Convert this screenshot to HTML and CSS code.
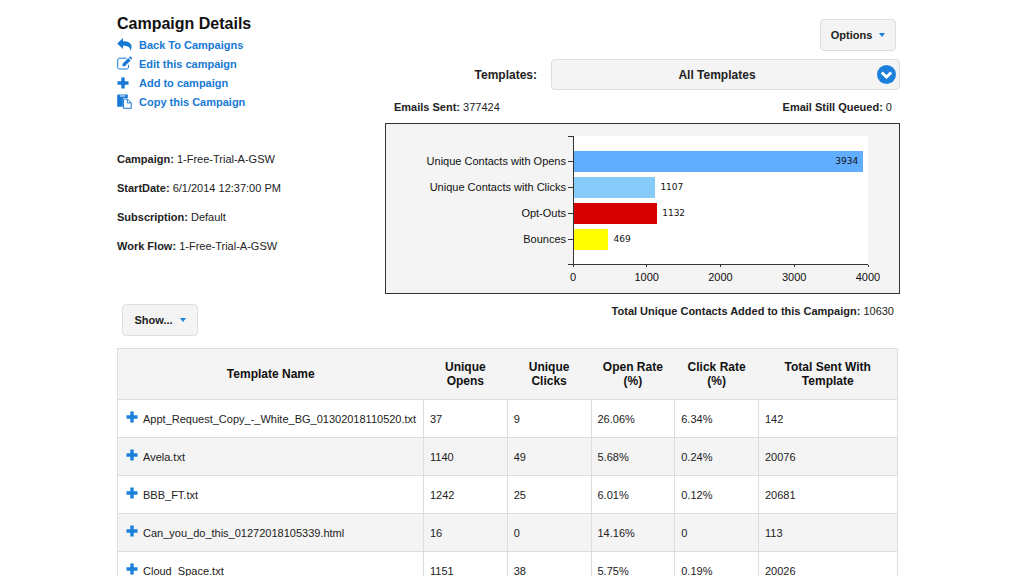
FILE: index.html
```
<!DOCTYPE html>
<html lang="en">
<head>
    <meta charset="UTF-8">
    <meta name="viewport" content="width=device-width, initial-scale=1.0">
    <title>Campaign Details</title>
    <link rel="stylesheet" href="styles.css">
</head>
<body>
    <svg class="sprite" aria-hidden="true">
        <symbol id="plus" viewBox="0 0 12 12">
            <path d="M4.3 0.5h3.4v3.8h3.8v3.4H7.7v3.8H4.3V7.7H0.5V4.3h3.8z"/>
        </symbol>
    </svg>

    <div class="container">
        <div class="top">
            <div class="details">
                <h1>Campaign Details</h1>
                <ul class="actions">
                    <li>
                        <a href="#">
                            <svg class="icon" viewBox="0 0 15 14"><path d="M6 0.5v3.2c5.4 0 8.6 1.9 8.6 5.6 0 1.5-.5 2.9-1.2 4.2.2-3.7-2.3-5.3-7.4-5.3v3.3L0.2 6z"/></svg>
                            Back To Campaigns
                        </a>
                    </li>
                    <li>
                        <a href="#">
                            <svg class="icon" viewBox="0 0 15 14">
                                <path class="line" d="M9.5 1.7H2.5a1.8 1.8 0 0 0-1.8 1.8v7.2a1.8 1.8 0 0 0 1.8 1.8h7.2a1.8 1.8 0 0 0 1.8-1.8V8.5"/>
                                <path d="M5.500 7.3L11.3 1.6l2.3 2.3L7.8 9.7H5.5zM12 0.9l.6-.6a.9.9 0 0 1 1.2 0l1 1a.9.9 0 0 1 0 1.2l-.6.6z"/>
                            </svg>
                            Edit this campaign
                        </a>
                    </li>
                    <li>
                        <a href="#">
                            <svg class="icon icon-plus"><use href="#plus"/></svg>
                            Add to campaign
                        </a>
                    </li>
                    <li>
                        <a href="#">
                            <svg class="icon" viewBox="0 0 15 15">
                                <path d="M0.8 0.5h9.4q.6 0 .6.6V4H7a1.2 1.2 0 0 0-1.2 1.2v7.6H0.8q-.6 0-.6-.6V1.1q0-.6.6-.6z"/>
                                <path class="gap" d="M2.8 1.5h5.4v1H2.8z"/>
                                <path class="line" d="M6.5 5.1h4l3.7 3.6v5.6H6.5zM10.3 5.2v3.7h3.8"/>
                            </svg>
                            Copy this Campaign
                        </a>
                    </li>
                </ul>
                <dl class="meta">
                    <div><dt>Campaign:</dt> <dd>1-Free-Trial-A-GSW</dd></div>
                    <div><dt>StartDate:</dt> <dd>6/1/2014 12:37:00 PM</dd></div>
                    <div><dt>Subscription:</dt> <dd>Default</dd></div>
                    <div><dt>Work Flow:</dt> <dd>1-Free-Trial-A-GSW</dd></div>
                </dl>
            </div>

            <div class="stats">
                <div class="options">
                    <button type="button" class="btn">Options <span class="caret"></span></button>
                </div>
                <div class="templates">
                    <label for="templates">Templates:</label>
                    <div class="select">
                        <select id="templates">
                            <option>All Templates</option>
                        </select>
                        <svg class="select-arrow" viewBox="0 0 19 19">
                            <circle cx="9.5" cy="9.5" r="9.5"/>
                            <path d="M4.8 7.5l4.7 4.5 4.7-4.5"/>
                        </svg>
                    </div>
                </div>
                <div class="counts">
                    <span><b>Emails Sent:</b> 377424</span>
                    <span><b>Email Still Queued:</b> 0</span>
                </div>

                <div class="chart">
                    <ul class="chart-labels">
                        <li>Unique Contacts with Opens</li>
                        <li>Unique Contacts with Clicks</li>
                        <li>Opt-Outs</li>
                        <li>Bounces</li>
                    </ul>
                    <div class="plot">
                        <div class="row"><div class="bar opens" style="width: 98.35%">3934</div></div>
                        <div class="row"><div class="bar clicks" style="width: 27.68%"></div><span>1107</span></div>
                        <div class="row"><div class="bar optouts" style="width: 28.3%"></div><span>1132</span></div>
                        <div class="row"><div class="bar bounces" style="width: 11.73%"></div><span>469</span></div>
                    </div>
                    <div class="axis">
                        <ol>
                            <li>0</li>
                            <li>1000</li>
                            <li>2000</li>
                            <li>3000</li>
                            <li>4000</li>
                        </ol>
                    </div>
                </div>

                <p class="total"><b>Total Unique Contacts Added to this Campaign:</b> 10630</p>
            </div>
        </div>

        <button type="button" class="btn btn-show">Show... <span class="caret"></span></button>

        <table>
            <colgroup>
                <col class="col-name">
                <col span="4">
                <col class="col-total">
            </colgroup>
            <thead>
                <tr>
                    <th>Template Name</th>
                    <th>Unique<br>Opens</th>
                    <th>Unique<br>Clicks</th>
                    <th>Open Rate<br>(%)</th>
                    <th>Click Rate<br>(%)</th>
                    <th>Total Sent With<br>Template</th>
                </tr>
            </thead>
            <tbody>
                <tr>
                    <td><button type="button" class="expand" aria-label="Expand"><svg><use href="#plus"/></svg></button>Appt_Request_Copy_-_White_BG_01302018110520.txt</td>
                    <td>37</td><td>9</td><td>26.06%</td><td>6.34%</td><td>142</td>
                </tr>
                <tr>
                    <td><button type="button" class="expand" aria-label="Expand"><svg><use href="#plus"/></svg></button>Avela.txt</td>
                    <td>1140</td><td>49</td><td>5.68%</td><td>0.24%</td><td>20076</td>
                </tr>
                <tr>
                    <td><button type="button" class="expand" aria-label="Expand"><svg><use href="#plus"/></svg></button>BBB_FT.txt</td>
                    <td>1242</td><td>25</td><td>6.01%</td><td>0.12%</td><td>20681</td>
                </tr>
                <tr>
                    <td><button type="button" class="expand" aria-label="Expand"><svg><use href="#plus"/></svg></button>Can_you_do_this_01272018105339.html</td>
                    <td>16</td><td>0</td><td>14.16%</td><td>0</td><td>113</td>
                </tr>
                <tr>
                    <td><button type="button" class="expand" aria-label="Expand"><svg><use href="#plus"/></svg></button>Cloud_Space.txt</td>
                    <td>1151</td><td>38</td><td>5.75%</td><td>0.19%</td><td>20026</td>
                </tr>
            </tbody>
        </table>
    </div>
</body>
</html>
```

FILE: styles.css
```
* {
    box-sizing: border-box;
}

html {
    scrollbar-width: none;
}

body {
    margin: 0;
    background: #fff;
    color: #222;
    font: 11px/16px "Liberation Sans", Arial, sans-serif;
}

ul, ol, dl, dd, p {
    margin: 0;
    padding: 0;
    list-style: none;
}

.sprite {
    position: absolute;
    width: 0;
    height: 0;
}

.container {
    padding: 0 124px 0 117px;
}

.top {
    display: grid;
    grid-template-columns: 268px 1fr;
}

/* Left column */
.details {
    padding-top: 13px;
}

h1 {
    margin: 0;
    color: #111;
    font-size: 16px;
    line-height: 22px;
}

.actions a {
    display: flex;
    align-items: center;
    height: 19px;
    gap: 7px;
    color: #1779d4;
    font-weight: bold;
    text-decoration: none;
}

.icon {
    width: 15px;
    height: 15px;
    fill: #1779d4;
}

.icon .line {
    fill: none;
    stroke: #1779d4;
}

.icon .gap {
    fill: #fff;
}

.icon-plus {
    height: 12px;
    width: 12px;
    margin-right: 3px;
}

.meta {
    display: grid;
    gap: 13px;
    margin-top: 40px;
}

.meta dt, .meta dd {
    display: inline;
}

.meta dt, b {
    color: #222;
    font-weight: bold;
}

/* Buttons */
.btn {
    display: inline-flex;
    align-items: center;
    justify-content: center;
    gap: 7px;
    width: 76px;
    height: 32px;
    padding: 0;
    border: 1px solid #ddd;
    border-radius: 4px;
    background: #f4f4f4;
    color: #222;
    font: bold 11px "Liberation Sans", Arial, sans-serif;
}

.caret {
    border: 3px solid transparent;
    border-top: 4px solid #1a80dc;
    border-bottom: 0;
}

.btn-show {
    display: flex;
    margin: -15px 0 11px 5px;
}

/* Right column */
.options {
    display: flex;
    justify-content: flex-end;
    padding: 19px 4px 8px 0;
}

.templates {
    display: flex;
    align-items: center;
    justify-content: flex-end;
    gap: 14px;
    font-size: 12px;
    font-weight: bold;
}

.select {
    position: relative;
    width: 349px;
}

.select select {
    display: block;
    width: 100%;
    height: 31px;
    padding: 0 17px 0 0;
    border: 1px solid #ddd;
    border-radius: 4px;
    appearance: none;
    background: #f4f4f4;
    color: #222;
    font: bold 12px "Liberation Sans", Arial, sans-serif;
    text-align-last: center;
}

.select-arrow {
    position: absolute;
    top: 6px;
    right: 4px;
    width: 19px;
    height: 19px;
    fill: #1a80dc;
    pointer-events: none;
}

.select-arrow path {
    fill: none;
    stroke: #fff;
    stroke-width: 3;
}

.counts {
    display: flex;
    justify-content: space-between;
    padding: 9px 8px 8px 9px;
}

/* Bar chart */
.chart {
    display: grid;
    grid-template-columns: 187px 1fr;
    padding: 12px 31px 8px 0;
    border: 1px solid #333;
    background: #f4f4f4;
    color: #111;
}

.chart-labels {
    padding-top: 12px;
}

.chart-labels li {
    display: flex;
    align-items: center;
    justify-content: flex-end;
    gap: 2px;
    height: 26px;
}

.chart-labels li::after {
    content: "";
    width: 5px;
    border-top: 1px solid #333;
}

.plot {
    position: relative;
    height: 129px;
    padding-top: 12px;
    border: solid #333;
    border-width: 0 0 1px 1px;
    background: #fff;
}

.plot::before, .plot::after {
    content: "";
    position: absolute;
    left: -6px;
    width: 6px;
    border-top: 1px solid #333;
}

.plot::before {
    top: 0;
}

.plot::after {
    bottom: -1px;
}

.row {
    display: flex;
    align-items: center;
    gap: 5px;
    height: 26px;
    font: 9px "DejaVu Sans", Verdana, sans-serif;
}

.bar {
    height: 21px;
    line-height: 21px;
    padding-right: 5px;
    text-align: right;
}

.opens { background: #61adff; }
.clicks { background: #87cbfa; }
.optouts { background: #d60000; }
.bounces { background: #ff0; }

.axis {
    grid-column: 2;
}

.axis ol {
    display: grid;
    grid-template-columns: repeat(5, 1fr);
    margin: 0 -12.5%;
    text-align: center;
}

.axis li::before {
    content: "";
    display: block;
    width: 1px;
    height: 2px;
    margin: 0 auto 2px;
    background: #333;
}

.total {
    padding: 9px 6px 0 0;
    text-align: right;
}

/* Templates table */
table {
    width: calc(100% - 2px);
    margin-top: 12px;
    table-layout: fixed;
    border: 1px solid #ddd;
    border-collapse: collapse;
}

.col-name { width: 306px; }
.col-total { width: 139px; }

th {
    height: 51px;
    padding: 0;
    background: #f4f4f4;
    color: #111;
    font-size: 12px;
    line-height: 14px;
}

td {
    height: 38px;
    padding: 0 6px;
    border: 1px solid #ddd;
    white-space: nowrap;
}

tbody tr:nth-child(even) {
    background: #f4f4f4;
}

.expand {
    width: 12px;
    height: 12px;
    margin: 0 5px 0 2px;
    padding: 0;
    border: 0;
    background: none;
}

.expand svg {
    display: block;
    width: 12px;
    height: 12px;
    fill: #1a80dc;
}
```
